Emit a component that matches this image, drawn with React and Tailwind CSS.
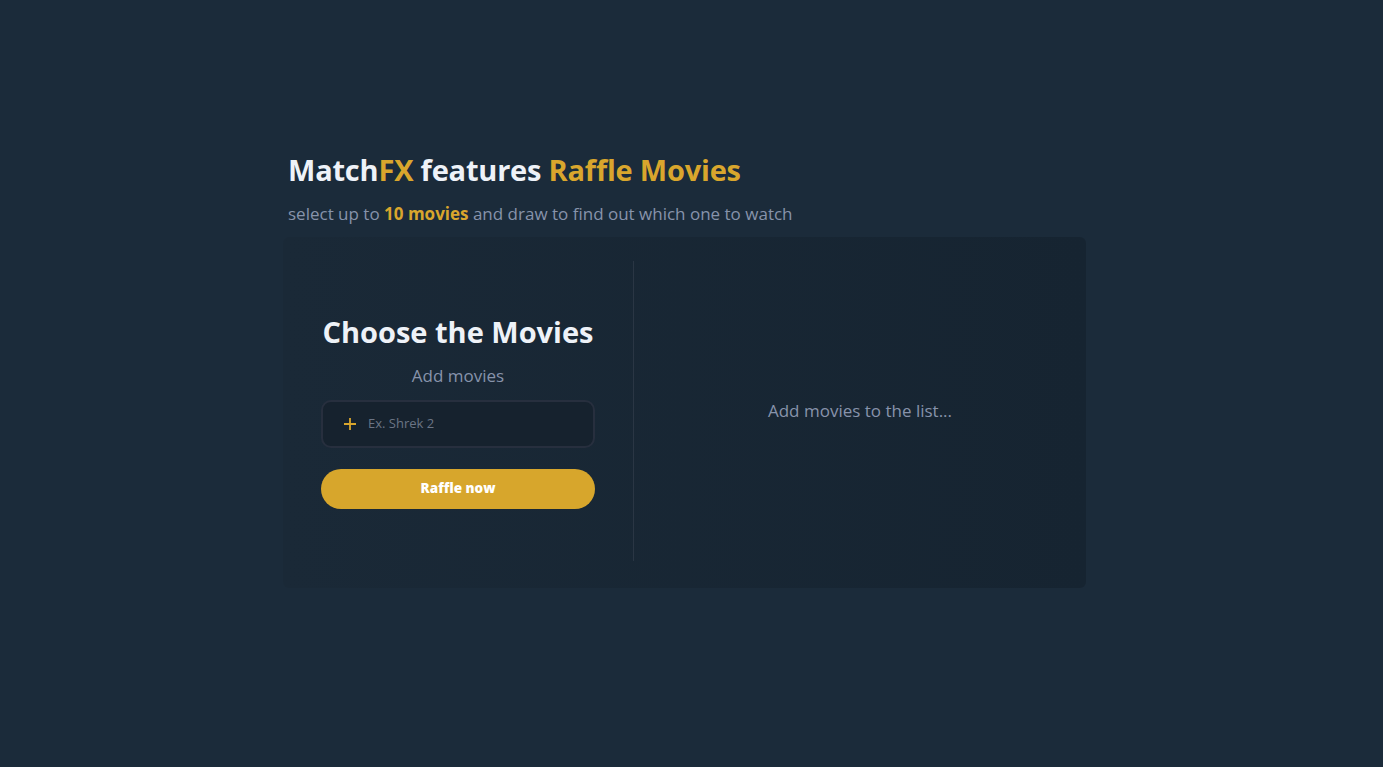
import { useState } from "react";

function App() {
  const [movie, setMovie] = useState("");

  return (
    <div
      className="min-h-screen w-full bg-[#1b2b3a] flex justify-center pr-[14px]"
      style={{ fontFamily: '"Open Sans", "Noto Sans", sans-serif' }}
    >
      <div className="w-[803px] pt-[150px]">
        {/* heading */}
        <h1 className="pl-[5px] text-[29px] leading-[40px] font-bold tracking-[-0.2px] text-[#eef2f8]">
          Match<span className="text-[#d9a62d]">FX</span> features{" "}
          <span className="text-[#d9a62d]">Raffle Movies</span>
        </h1>
        <p className="pl-[5px] mt-[12px] text-[17px] leading-[24px] text-[#8793ab]">
          select up to <span className="font-bold text-[#d9a62d]">10 movies</span> and draw to find out which one to watch
        </p>

        {/* panel */}
        <div className="mt-[11px] h-[351px] rounded-md bg-gradient-to-r from-[#1a2937] to-[#162431] flex pt-[24px] pb-[27px]">
          <div className="w-[351px] border-r border-[#2a3644] flex flex-col items-center justify-center">
            <h2 className="text-[29px] leading-[36px] font-bold text-[#eef2f8]">Choose the Movies</h2>
            <p className="mt-[14px] text-[17px] leading-[24px] text-[#8793ab]">Add movies</p>
            <div className="mt-[12px] w-[274px] h-[48px] rounded-[10px] border-2 border-[#272f3e] bg-[#16222e] flex items-center pl-[20px] gap-[11px]">
              <svg width="14" height="14" viewBox="0 0 14 14" className="shrink-0">
                <path d="M7 1v12M1 7h12" stroke="#d9a62d" strokeWidth="1.8" />
              </svg>
              <input
                value={movie}
                onChange={(e) => setMovie(e.target.value)}
                placeholder="Ex. Shrek 2"
                className="bg-transparent outline-none text-[13px] text-[#c6cedb] placeholder:text-[#6b7585] flex-1"
              />
            </div>
            <button className="mt-[21px] w-[274px] h-[40px] rounded-full bg-[#d7a62c] text-white text-[13.5px] font-extrabold">
              Raffle now
            </button>
          </div>
          <div className="flex-1 flex items-center justify-center">
            <p className="text-[17px] leading-[24px] text-[#8793ab]">Add movies to the list...</p>
          </div>
        </div>
      </div>
    </div>
  );
}

export default App;
